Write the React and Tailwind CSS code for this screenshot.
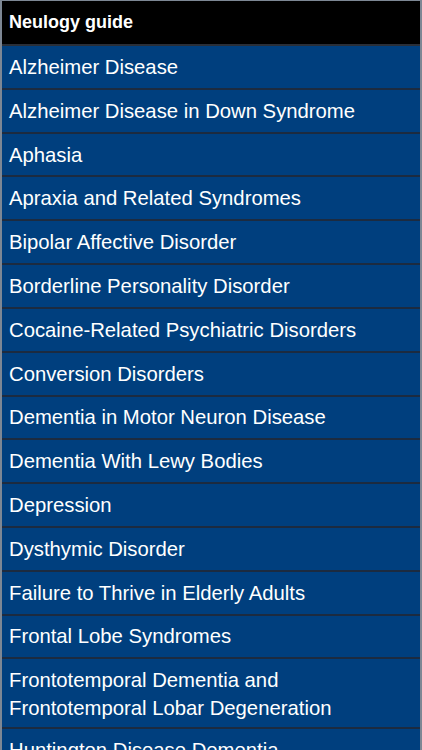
const topics = [
  'Alzheimer Disease',
  'Alzheimer Disease in Down Syndrome',
  'Aphasia',
  'Apraxia and Related Syndromes',
  'Bipolar Affective Disorder',
  'Borderline Personality Disorder',
  'Cocaine-Related Psychiatric Disorders',
  'Conversion Disorders',
  'Dementia in Motor Neuron Disease',
  'Dementia With Lewy Bodies',
  'Depression',
  'Dysthymic Disorder',
  'Failure to Thrive in Elderly Adults',
  'Frontal Lobe Syndromes',
  'Frontotemporal Dementia and Frontotemporal Lobar Degeneration',
  'Huntington Disease Dementia',
  'Hypochondriasis',
];

export default function App() {
  return (
    <div
      className="w-[422px] h-[750px] overflow-hidden bg-[#7d8794] border-t border-l-2 border-r-2 border-[#7d8794]"
      style={{ fontFamily: '"Liberation Sans", Arial, sans-serif' }}
    >
      <div className="h-[45px] bg-black flex items-center px-[7px] border-b-2 border-[#2a2f38]">
        <span className="text-white font-bold text-[18px]">Neulogy guide</span>
      </div>
      <ul>
        {topics.map((t) => (
          <li
            key={t}
            className={`bg-[#003f7e] border-b-2 border-[#1c2b40] text-white text-[20.3px] leading-[28px] px-[7px] ${
              t.length > 40 ? 'pt-[7px] pb-[5px]' : 'py-[6.92px]'
            }`}
          >
            {t}
          </li>
        ))}
      </ul>
    </div>
  );
}
